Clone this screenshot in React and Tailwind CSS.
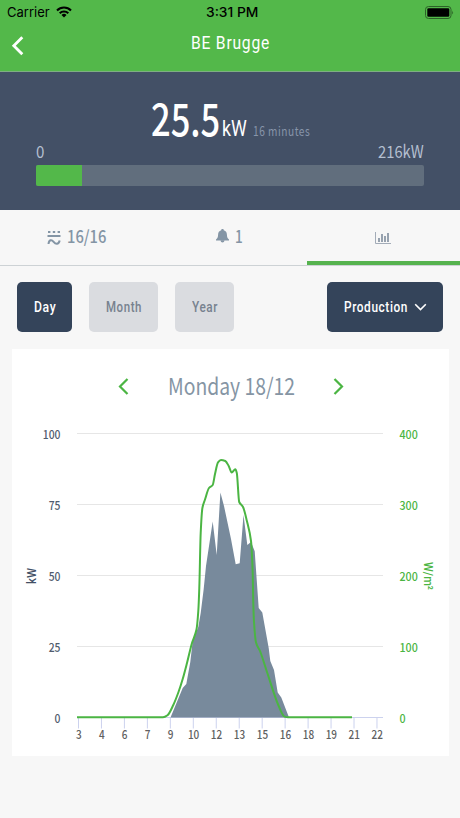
import { useState, useRef, useLayoutEffect } from 'react'
import clsx from 'clsx'

const RANGES = [
  { name: 'Day', box: 'w-[55px] mr-[17px]', width: 22 },
  { name: 'Month', box: 'w-[69px] mr-[17px]', width: 36 },
  { name: 'Year', box: 'w-[59px]', width: 26 },
]

const GRID = [
  { y: 433.5, power: '100', sun: '400' },
  { y: 504.5, power: '75', sun: '300' },
  { y: 575.5, power: '50', sun: '200' },
  { y: 646.5, power: '25', sun: '100' },
  { y: 717.5, power: '0', sun: '0' },
]

const HOURS = [3, 4, 6, 7, 9, 10, 12, 13, 15, 16, 18, 19, 21, 22]

const PRODUCTION = [
  [170.5, 717.5], [182.7, 688], [186.3, 684], [190.3, 662], [192.7, 641], [198.3, 627], [200.7, 613],
  [203.7, 589], [206, 566], [212.7, 521.5], [216.7, 555], [220.4, 492.5], [224, 506], [231, 539],
  [235.7, 564.3], [239.7, 563.3], [243.5, 515], [247.3, 545], [251, 542], [254.7, 551.3], [258.7, 608],
  [262.3, 612.5], [268.7, 648], [270.3, 661], [274, 670], [277.7, 692.5], [281.3, 697.5], [289, 717.5],
]

const IRRADIATION = [
  [77, 717.3], [163, 717.3], [167.5, 715.3], [173.3, 705], [178.5, 692], [182.7, 679], [187, 663],
  [192, 643], [196.5, 629.5], [198.3, 611], [199.3, 588], [200.7, 533], [202.4, 508], [205, 499.5],
  [209, 488], [212.7, 485], [215, 474], [218, 462.3], [221, 460], [225.3, 461], [228.7, 466],
  [231.7, 472.4], [235.3, 469.3], [236.8, 473], [239.2, 502], [243, 507], [246.9, 521], [251, 541],
  [252.7, 573], [253.2, 600], [254, 622], [256, 642.5], [260, 651], [267, 672], [278.3, 705],
  [284.5, 716.6], [288, 717.3], [352, 717.3],
]

// Monotone cubic curve through the points
function smooth(points) {
  const slope = (k) => {
    const p = points[k - 1]
    const n = points[k + 1]
    if (!p || !n) return 0
    const c = points[k]
    const s1 = (c[1] - p[1]) / (c[0] - p[0])
    const s2 = (n[1] - c[1]) / (n[0] - c[0])
    return s1 * s2 <= 0 ? 0 : (2 * s1 * s2) / (s1 + s2)
  }
  let d = `M${points[0].join(' ')}`
  for (let i = 0; i < points.length - 1; i++) {
    const a = points[i]
    const b = points[i + 1]
    const dx = (b[0] - a[0]) / 3
    d += `C${a[0] + dx} ${a[1] + slope(i) * dx} ${b[0] - dx} ${b[1] - slope(i + 1) * dx} ${b[0]} ${b[1]}`
  }
  return d
}

// Condenses a text to the given width
function Narrow({ width, className, children }) {
  const ref = useRef(null)
  const [scale, setScale] = useState(1)

  useLayoutEffect(() => {
    setScale(width / ref.current.offsetWidth)
  }, [width, children])

  return (
    <span className={clsx('block shrink-0 whitespace-nowrap', className)} style={{ width }}>
      <span ref={ref} className="inline-block origin-left" style={{ transform: `scaleX(${scale})` }}>
        {children}
      </span>
    </span>
  )
}

function StatusBar() {
  return (
    <div className="h-6 flex items-center justify-between pl-[7px] pr-[6px] text-black font-['Inter',sans-serif] text-[13px] leading-6">
      <div className="flex-1 flex items-center gap-[6px]">
        <Narrow width={43}>Carrier</Narrow>
        <svg width="16" height="12" viewBox="0 0 16 12" fill="none" stroke="#000" strokeWidth="2.1">
          <path d="M1 4.4a10 10 0 0 1 14 0" />
          <path d="M3.7 7.2a6.2 6.2 0 0 1 8.6 0" />
          <path d="M8 11.4 5.5 9a3.6 3.6 0 0 1 5 0z" fill="#000" stroke="none" />
        </svg>
      </div>
      <Narrow width={52} className="mr-[-2px] font-medium">3:31 PM</Narrow>
      <div className="flex-1 flex justify-end">
        <svg width="29" height="13" viewBox="0 0 29 13">
          <rect x="0.5" y="0.5" width="25.5" height="12" rx="3" fill="none" stroke="#2c6227" />
          <rect x="2.3" y="2.2" width="22" height="8.6" rx="1.3" />
          <path d="M27.2 4.5q1.6 2 0 4z" fill="#2c6227" />
        </svg>
      </div>
    </div>
  )
}

function Chart() {
  return (
    <svg className="block" width="437" height="336" viewBox="12 420 437 336" fontSize="12" fontWeight="500">
      {GRID.map(({ y }) => (
        <path key={y} d={`M77 ${y}H383`} stroke={y > 700 ? '#ccd2ee' : '#e6e6e6'} />
      ))}
      {HOURS.map((hour, i) => (
        <path key={hour} d={`M${78.5 + i * 22.96} 718V728.5`} stroke="#ccd2ee" />
      ))}
      <path d={`M${PRODUCTION.map((p) => p.join(' ')).join('L')}Z`} fill="#788a9c" />
      <path d={smooth(IRRADIATION)} fill="none" stroke="#4bb543" strokeWidth="2" strokeLinejoin="round" />
      {GRID.map(({ y, power, sun }) => (
        <g key={y}>
          <text
            x={60.5 - power.length * 5.9}
            y={y + 5.5}
            textLength={power.length * 5.9}
            lengthAdjust="spacingAndGlyphs"
            fill="#515c6e"
          >
            {power}
          </text>
          <text
            x="399.5"
            y={y + 5.5}
            textLength={sun.length * 6.1}
            lengthAdjust="spacingAndGlyphs"
            fill="#4bb543"
          >
            {sun}
          </text>
        </g>
      ))}
      {HOURS.map((hour, i) => {
        const width = String(hour).length * 5.7
        return (
          <text
            key={hour}
            x={78.8 + i * 22.96 - width / 2}
            y="738.5"
            textLength={width}
            lengthAdjust="spacingAndGlyphs"
            fill="#606060"
          >
            {hour}
          </text>
        )
      })}
      <g className="font-['Roboto',sans-serif]">
        <text transform="translate(36 584) rotate(-90)" textLength="16" lengthAdjust="spacingAndGlyphs" fill="#435066">
          kW
        </text>
        <text transform="translate(424 562) rotate(90)" textLength="28" lengthAdjust="spacingAndGlyphs" fill="#4bb543">
          W/m²
        </text>
      </g>
    </svg>
  )
}

export default function App() {
  const [range, setRange] = useState('Day')

  return (
    <div className="w-[460px] h-[818px] overflow-hidden flex flex-col bg-[#f7f7f7] font-['Noto_Sans_CJK_JP',sans-serif]">
      <header className="h-[72px] shrink-0 bg-[#53b84a] border-b border-[#7fae83]">
        <StatusBar />
        <div className="h-[47px] flex items-start px-[11px]">
          <button type="button" aria-label="Back" className="flex-1 pt-[12px]">
            <svg width="14" height="20" viewBox="0 0 14 20" fill="none" stroke="#fff" strokeWidth="2.8">
              <path d="M11.3 1.2 2.8 9.7l8.5 8.6" />
            </svg>
          </button>
          <Narrow width={79} className="pt-[6px] text-[19px] leading-[26px] tracking-wider text-white font-['Roboto',sans-serif]">
            BE Brugge
          </Narrow>
          <div className="flex-1" />
        </div>
      </header>

      <section className="h-[138px] shrink-0 bg-[#435066] px-9 pt-[23px]">
        <div className="h-[45px] flex items-baseline justify-center leading-[44px] text-white">
          <Narrow width={69} className="text-[44px] font-medium">25.5</Narrow>
          <Narrow width={25} className="ml-[2px] text-[22px] font-['Roboto',sans-serif]">kW</Narrow>
          <Narrow width={57} className="ml-[6px] text-[13px] tracking-wider text-[#8795aa]">16 minutes</Narrow>
        </div>
        <div className="h-[25px] flex justify-between text-[17px] leading-[21px] text-[#b4bfd0]">
          <Narrow width={8}>0</Narrow>
          <Narrow width={46}>216kW</Narrow>
        </div>
        <div className="h-[21px] rounded-[2px] overflow-hidden bg-[#616e7d]">
          <div className="h-full w-[46px] bg-[#53b84a]" />
        </div>
      </section>

      <nav className="h-14 shrink-0 grid grid-cols-3 border-b border-[#cdd2d5] text-[17px] leading-6 text-[#8495a5]">
        <div className="flex items-start justify-center pt-[14px]">
          <svg className="mt-[6px] mr-[6px]" width="14" height="16" viewBox="0 0 14 16" fill="none" stroke="#8495a5" strokeWidth="2">
            <path d="M1 2h2.4M5.8 2h2.4M10.6 2H13M.5 6h13" />
            <path d="M1.5 14C2 9.6 4.6 9.3 6.6 11.8S11.5 15 12.7 10.5" />
          </svg>
          <Narrow width={39} className="font-medium">16/16</Narrow>
        </div>
        <div className="flex items-start justify-center pt-[14px]">
          <svg className="mt-[5px] mr-[6px]" width="13" height="14" viewBox="0 0 13 14" fill="#8495a5">
            <path d="M6.5 0c.8 0 1.300.5 1.300 1.200 2.100.6 3 2.200 3.100 4.200.1 2.500.5 3.700 2.100 5.200v.9H0v-.9C1.600 9.100 2 7.900 2.100 5.400c.1-2 1-3.600 3.100-4.200C5.200.5 5.700 0 6.500 0z" />
            <path d="M4.500 11.300h4c-.2 2.900-3.800 2.900-4 0z" />
          </svg>
          <Narrow width={8} className="font-medium">1</Narrow>
        </div>
        <div className="flex items-start justify-center pt-[22px] border-b-4 border-[#56b34f]">
          <svg width="16" height="13" viewBox="0 0 16 13" fill="none" stroke="#a3acb8">
            <path d="M.5 0v11.5H16" />
            <path stroke="#97a2af" strokeWidth="2" d="M4 10V6M7 10V2M10 10V4M13 10V1" />
          </svg>
        </div>
      </nav>

      <div className="flex shrink-0 pt-4 pl-[17px] pr-[17px] text-[15px] leading-[50px] font-medium tracking-wider font-['Roboto',sans-serif]">
        {RANGES.map(({ name, box, width }) => (
          <button
            key={name}
            type="button"
            onClick={() => setRange(name)}
            className={clsx(
              'h-[50px] flex justify-center rounded-[5px] cursor-pointer',
              box,
              range === name ? 'bg-[#34445a] text-white' : 'bg-[#dadce0] text-[#77828f]',
            )}
          >
            <Narrow width={width}>{name}</Narrow>
          </button>
        ))}
        <button type="button" className="ml-auto w-[116px] h-[50px] flex items-center justify-center gap-[6px] rounded-[5px] bg-[#34445a] text-white">
          <Narrow width={64}>Production</Narrow>
          <svg width="13" height="8" viewBox="0 0 13 8" fill="none" stroke="#fff" strokeWidth="1.6">
            <path d="M1.2 1.2 6.5 6.5l5.3-5.3" />
          </svg>
        </button>
      </div>

      <main className="mt-[17px] ml-3 mr-[11px] h-[407px] shrink-0 bg-white">
        <div className="h-[71px] pt-[20px] flex items-start justify-center text-[#8595a4]">
          <button type="button" aria-label="Previous day" className="pt-[9px]">
            <svg width="11" height="17" viewBox="0 0 11 17" fill="none" stroke="#4bb543" strokeWidth="2.2">
              <path d="M9.5 1 2 8.500 9.5 16" />
            </svg>
          </button>
          <Narrow width={127} className="ml-[39px] mr-[38px] text-[23px] leading-[32px]">Monday 18/12</Narrow>
          <button type="button" aria-label="Next day" className="pt-[9px]">
            <svg width="11" height="17" viewBox="0 0 11 17" fill="none" stroke="#4bb543" strokeWidth="2.2">
              <path d="M1.5 1 9 8.500 1.5 16" />
            </svg>
          </button>
        </div>
        <Chart />
      </main>
    </div>
  )
}
